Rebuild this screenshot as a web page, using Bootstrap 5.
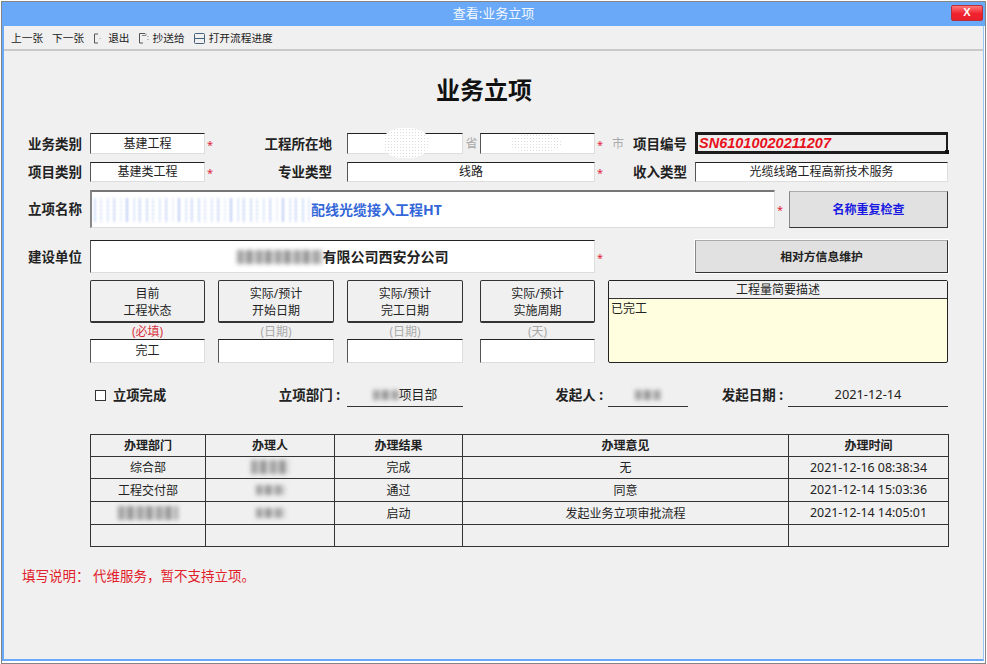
<!DOCTYPE html>
<html lang="zh-CN">
<head>
<meta charset="utf-8">
<title>查看:业务立项</title>
<link href="https://cdn.jsdelivr.net/npm/bootstrap@5.3.0/dist/css/bootstrap.min.css" rel="stylesheet">
<style>
html,body{height:100%;margin:0;background:#fff;overflow:hidden}
body{font-family:"Noto Sans","Noto Sans CJK SC",sans-serif;font-size:12px;color:#222;line-height:1.2}
.win{width:985px;height:663px;margin:1px 0 0 1px;border:1px solid #858585}
.titlebar{height:24px;background:#6aa9f8;color:#f4f8ff;position:relative}
.titlebar-text{font-size:13px}
.closer{position:absolute;right:2px;top:3px;width:32px;height:16px;border:1px solid #b5303a;border-radius:2px;background:linear-gradient(#f77,#f0222e 55%,#e8202c);color:#fff;font:bold 11px/13px "Liberation Sans",sans-serif;text-align:center}
.sheet{height:calc(100% - 26px);background:#f0f0f0;border-left:2px solid #6aa9f8;border-right:1px solid #9cc4f6;border-bottom:2px solid #6aa9f8;margin-right:1px}
.tools{height:25px;border-bottom:2px solid #c9c9c9;padding:1px 0 0 7px;font-size:10.7px;color:#222}
.tools svg{display:block;flex:none}
.g9{margin-left:9px}.g8{margin-left:8px}.g7{margin-left:7px}.g4{margin-left:4px}
.page-head{width:960px;font-size:24px;font-weight:700;line-height:34px;padding-top:22px;margin:0 0 26px;color:#111}
.fline{display:grid;grid-template-columns:86px 115px 13px 116px 13px 116px 17px 115px 13px 87px 253px;width:944px}
.gap8{margin-top:8px}.gap12{margin-top:12px}
.h21{height:21px}.h20{height:20px}.h38{height:38px}.h33{height:33px}
.lab{font-size:13.5px;font-weight:700;color:#222;display:flex;align-items:center;justify-content:flex-end;padding:1px 8px 0 0;white-space:nowrap}
.lab-wide{grid-column:span 2;padding-right:15px}
.fld{background:#fff;border-top:1px solid #222;border-left:1px solid #555;border-right:1px solid #ddd;border-bottom:1px solid #ddd;display:flex;align-items:center;justify-content:center;font-size:12px;padding-top:1px;white-space:nowrap;position:relative;min-width:0}
.fld-route{grid-column:6 / 9}
.star{color:#e0243a;font-size:11px;display:flex;align-items:center;padding:2px 0 0 2px}
.faint{color:#aaa;font-size:12px;display:flex;align-items:center;justify-content:center;padding-top:1px}
.span-code{display:flex;align-items:center;padding-left:4px}
.span-code .lab{flex:1;padding-right:8px}
.snum{background:#eee;border:3px solid #1c1c1c;border-right-width:2px;justify-content:flex-start;padding:0 0 0 1px;color:#e8101c;font:italic 700 14.5px/1 "Liberation Sans",sans-serif;margin-top:-1px}
.snum::after{content:"";position:absolute;right:-3px;bottom:-3px;width:4px;height:4px;background:#111}
.wide2{grid-column:2 / -1;display:flex}
.name-fld{flex:1;justify-content:flex-start;border-top:2px solid #777;border-left:2px solid #888;font-size:14px;font-weight:700;color:#3366d8;overflow:hidden}
.comp-fld{grid-column:2 / 9;font-size:14px;font-weight:700;color:#222}
.cmd{--bs-btn-padding-x:0;--bs-btn-padding-y:0;--bs-btn-font-size:12px;--bs-btn-font-weight:700;--bs-btn-border-radius:0;background:#e1e1e1;font-weight:700;font-size:12px;border:1px solid;border-color:#aaa #333 #333 #888}
.cmd-check{width:159px;margin-left:3px;color:#1a1ae0;margin-top:1px}
.cmd-blue-star{width:11px}
.cmd-party{grid-column:11;color:#222;outline:1px solid #fff;font-size:11.8px}
.lower{display:grid;grid-template-columns:86px 115px 13px 116px 13px 116px 17px 115px 13px 340px;grid-template-rows:43px 16px 24px;width:944px;margin-top:7px}
.c2{grid-column:2}.c4{grid-column:4}.c6{grid-column:6}.c8{grid-column:8}
.hdr-box{background:#f0f0f0;border:1px solid #333;border-bottom-width:2px;border-radius:2px;color:#222;font-size:12px;line-height:17px;padding-top:1px;display:flex;flex-direction:column;align-items:center;justify-content:center}
.hint{padding-top:3px}
.hint-red{color:#d8313c}
.desc{grid-column:10;grid-row:1 / 4;border:1px solid #222;border-radius:2px;background:#ffffe0;display:flex;flex-direction:column}
.desc-head{background:#f0f0f0;border-bottom:1px solid #333;height:18px;line-height:18px;text-align:center;flex:none}
.desc-body{padding:2px;line-height:15px}
.meta{height:28px;margin-top:16px}
.chk-wrap{grid-column:2 / 4;display:flex;align-items:center;padding:5px 0 0 5px;gap:7px;font-size:13.3px;font-weight:700;margin:0}
.chk-wrap .form-check-input{width:11px;height:11px;margin:0;border:1px solid #333;border-radius:0;background-color:#fff;float:none}
.meta-lab{font-size:13.5px;font-weight:700;display:flex;align-items:center;justify-content:flex-end;padding:5px 5px 0 0;white-space:pre}
.meta-val{border-bottom:1px solid #333;display:flex;align-items:center;justify-content:center;padding-top:5px;font-size:12.8px;white-space:nowrap}
.m-a{grid-column:4 / 6;padding-right:7px}
.m-b{grid-column:7 / 10}
.meta-rest{grid-column:10 / 12;display:flex}
.val-80{width:80px}.lab-100{width:100px}.val-160{width:160px}
.flow-wrap{margin:27px 0 0 86px;width:859px}
.table.flow{--bs-table-bg:transparent;--bs-table-color:#222;--bs-table-border-color:#333;table-layout:fixed;width:859px;margin:0;border-color:#333;font-size:12px}
.table.flow>:not(caption)>*>*{padding:1px 0 0;height:23px;text-align:center;vertical-align:middle;border-color:#333;line-height:1}
.table.flow>thead>tr>th{height:22px;font-size:12px;font-weight:700}
.table.flow>tbody>.row-short>td{height:22px}
.t1{width:115px}.t2{width:129px}.t3{width:128px}.t4{width:326px}.t5{width:160px}
.table.flow .tm{font-size:12.4px}
.blot{display:inline-block;filter:blur(2px);background:repeating-linear-gradient(90deg,#a2a2a2 0 6px,#cbcbcb 6px 10px,#8f8f8f 10px 15px,#d6d6d6 15px 19px)}
.b-h10{height:10px}.b-h14{height:14px}.b-h18{height:18px}
.w26{width:26px}.w29{width:29px}.w38{width:38px}.w60{width:60px}.w86{width:86px}
.scrub{width:220px;height:24px;margin-left:-1px;filter:blur(.8px);background-color:#f6f8fe;background-image:radial-gradient(#fff 1.5px,transparent 1.6px),repeating-linear-gradient(90deg,#fff 0 3px,#cfdcf8 3px 5px,#fff 5px 9px,#b9caf3 9px 11px,#fff 11px 13px);background-size:4px 4px,auto}
.patch{position:absolute;background-color:#fff;background-image:radial-gradient(#dcdcdc .7px,transparent .9px);background-size:3px 3px;filter:blur(.6px);border-radius:40%}
.patch-a{left:36px;top:-6px;width:44px;height:30px}
.patch-b{left:30px;top:0;width:50px;height:18px}
.foot-note{color:#e0202a;font-size:13.5px;margin:21px 0 0 18px;white-space:pre}
</style>
</head>
<body>
<div class="win">
  <div class="titlebar d-flex align-items-center justify-content-center">
    <span class="titlebar-text">查看:业务立项</span>
    <div class="closer" aria-label="关闭">X</div>
  </div>
  <div class="sheet">
    <div class="tools d-flex align-items-center">
      <span>上一张</span>
      <span class="g9">下一张</span>
      <svg class="g9" width="8" height="11" viewBox="0 0 8 11"><path d="M5 1H1.5V10H5" fill="none" stroke="#555"/><path d="M7 5v1" stroke="#999"/></svg>
      <span class="g7">退出</span>
      <svg class="g8" width="11" height="12" viewBox="0 0 11 12"><path d="M7 1.5H1.5V11H5" fill="none" stroke="#555"/><path d="M4 3.5H8V1.5M10 4v1M10 7v1" fill="none" stroke="#888"/></svg>
      <span class="g4">抄送给</span>
      <svg class="g9" width="11" height="11" viewBox="0 0 11 11"><rect x=".5" y=".5" width="10" height="10" rx="1" fill="none" stroke="#45607c"/><path d="M1 5.5H10" stroke="#45607c"/></svg>
      <span class="g4">打开流程进度</span>
    </div>

    <h1 class="page-head text-center">业务立项</h1>

    <div class="fline h21">
      <div class="lab">业务类别</div>
      <div class="fld">基建工程</div>
      <div class="star">*</div>
      <div class="lab lab-wide">工程所在地</div>
      <div class="fld"><span class="patch patch-a"></span></div>
      <div class="faint">省</div>
      <div class="fld"><span class="patch patch-b"></span></div>
      <div class="star">*</div>
      <div class="span-code"><span class="faint">市</span><span class="lab">项目编号</span></div>
      <div class="fld snum">SN61010020211207</div>
    </div>

    <div class="fline h20 gap8">
      <div class="lab">项目类别</div>
      <div class="fld">基建类工程</div>
      <div class="star">*</div>
      <div class="lab lab-wide">专业类型</div>
      <div class="fld fld-route">线路</div>
      <div class="star">*</div>
      <div class="lab">收入类型</div>
      <div class="fld">光缆线路工程高新技术服务</div>
    </div>

    <div class="fline h38 gap8">
      <div class="lab">立项名称</div>
      <div class="wide2">
        <div class="fld name-fld"><span class="scrub"></span><span>配线光缆接入工程HT</span></div>
        <div class="star cmd-blue-star">*</div>
        <button type="button" class="btn cmd cmd-check">名称重复检查</button>
      </div>
    </div>

    <div class="fline h33 gap12">
      <div class="lab">建设单位</div>
      <div class="fld comp-fld"><span class="blot b-h14 w86"></span><span>有限公司西安分公司</span></div>
      <div class="star">*</div>
      <div></div>
      <button type="button" class="btn cmd cmd-party">相对方信息维护</button>
    </div>

    <div class="lower">
      <div class="hdr-box c2"><span>目前</span><span>工程状态</span></div>
      <div class="hdr-box c4"><span>实际/预计</span><span>开始日期</span></div>
      <div class="hdr-box c6"><span>实际/预计</span><span>完工日期</span></div>
      <div class="hdr-box c8"><span>实际/预计</span><span>实施周期</span></div>
      <div class="desc">
        <div class="desc-head">工程量简要描述</div>
        <div class="desc-body">已完工</div>
      </div>
      <div class="faint hint hint-red c2">(必填)</div>
      <div class="faint hint c4">(日期)</div>
      <div class="faint hint c6">(日期)</div>
      <div class="faint hint c8">(天)</div>
      <div class="fld c2">完工</div>
      <div class="fld c4"></div>
      <div class="fld c6"></div>
      <div class="fld c8"></div>
    </div>

    <div class="fline meta">
      <label class="chk-wrap"><input class="form-check-input" type="checkbox"><span>立项完成</span></label>
      <div class="meta-lab m-a">立项部门 :</div>
      <div class="meta-val"><span class="blot b-h10 w26"></span><span>项目部</span></div>
      <div class="meta-lab m-b">发起人 :</div>
      <div class="meta-rest">
        <div class="meta-val val-80"><span class="blot b-h10 w26"></span></div>
        <div class="meta-lab lab-100">发起日期 :</div>
        <div class="meta-val val-160">2021-12-14</div>
      </div>
    </div>

    <div class="flow-wrap">
      <table class="table table-bordered flow">
        <thead>
          <tr><th class="t1">办理部门</th><th class="t2">办理人</th><th class="t3">办理结果</th><th class="t4">办理意见</th><th class="t5">办理时间</th></tr>
        </thead>
        <tbody>
          <tr class="row-short"><td>综合部</td><td><span class="blot b-h14 w38"></span></td><td>完成</td><td>无</td><td class="tm">2021-12-16 08:38:34</td></tr>
          <tr><td>工程交付部</td><td><span class="blot b-h10 w29"></span></td><td>通过</td><td>同意</td><td class="tm">2021-12-14 15:03:36</td></tr>
          <tr><td><span class="blot b-h14 w60"></span></td><td><span class="blot b-h10 w29"></span></td><td>启动</td><td>发起业务立项审批流程</td><td class="tm">2021-12-14 14:05:01</td></tr>
          <tr class="row-short"><td></td><td></td><td></td><td></td><td></td></tr>
        </tbody>
      </table>
    </div>

    <p class="foot-note">填写说明： 代维服务，暂不支持立项。</p>
  </div>
</div>
<script src="https://cdn.jsdelivr.net/npm/bootstrap@5.3.0/dist/js/bootstrap.bundle.min.js"></script>
</body>
</html>
